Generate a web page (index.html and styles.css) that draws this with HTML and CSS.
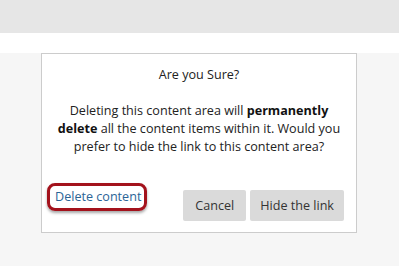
FILE: index.html
```html
<!DOCTYPE html>
<html lang="en">
<head>
    <meta charset="UTF-8">
    <title>Are you Sure?</title>
    <link rel="stylesheet" href="styles.css">
</head>
<body>
    <div class="topbar"></div>
    <div class="stage">
        <div class="dialog">
            <div class="title">Are you Sure?</div>
            <p class="message">Deleting this content area will <b>permanently delete</b> all the content items within it. Would you prefer to hide the link to this content area?</p>
            <div class="actions">
                <a class="delete-link" href="#">Delete content</a>
                <div class="buttons">
                    <button class="btn btn-cancel">Cancel</button>
                    <button class="btn">Hide the link</button>
                </div>
            </div>
        </div>
    </div>
</body>
</html>
```

FILE: styles.css
```css
body {
    margin: 0;
    background-color: #fff;
    font-family: "Open Sans", Arial, sans-serif;
    font-size: 12.6px;
    color: #222;
}

.topbar {
    height: 33px;
    background-color: #e6e6e6;
    margin-bottom: 20px;
}

.stage {
    height: 213px;
    background-color: #f6f6f6;
    padding-left: 41px;
}

.dialog {
    width: 314px;
    height: 178px;
    background-color: #fff;
    border: 1px solid #cccccc;
    display: flex;
    flex-direction: column;
}

.title {
    text-align: center;
    margin-top: 12px;
    line-height: 18px;
}

.message {
    text-align: center;
    line-height: 18px;
    margin: 18px 10px 0;
}

.message b {
    font-weight: 700;
    color: #111;
}

.actions {
    display: flex;
    align-items: center;
    justify-content: space-between;
    margin-top: auto;
    padding: 0 12px 11px 5px;
}

.delete-link {
    color: #2a6496;
    text-decoration: none;
    padding: 2px 3px 2px 5px;
    border: 3px solid #a3121c;
    border-radius: 8px;
    box-shadow: 0 2px 3px rgba(0, 0, 0, 0.35);
    margin-top: -18px;
    line-height: 18px;
}

.buttons {
    display: flex;
    gap: 4px;
}

.btn {
    font-family: inherit;
    font-size: 12.6px;
    color: #333;
    background-color: #dadada;
    border: none;
    border-radius: 2px;
    height: 31px;
    padding: 0 10px;
}

.btn-cancel {
    padding: 0 12px;
}
```
